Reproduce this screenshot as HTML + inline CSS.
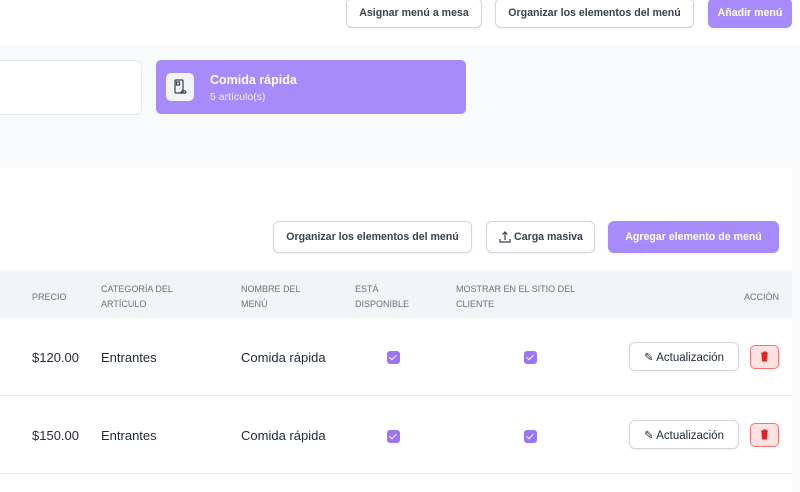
<!DOCTYPE html>
<html><head><meta charset="utf-8"><style>
*{box-sizing:border-box;margin:0;padding:0}
body{width:800px;height:492px;overflow:hidden;background:#fff;font-family:"Liberation Sans",sans-serif;color:#1f2937;position:relative}
.a{position:absolute}
.btn{position:absolute;border:1px solid #d1d5db;border-radius:6px;background:#fff;font-size:10.6px;font-weight:bold;color:#374151;display:flex;align-items:center;justify-content:center;box-shadow:0 1px 2px rgba(0,0,0,.06)}
.pb{background:#a78bfa;border-color:#a78bfa;color:#fff}
.th{position:absolute;font-size:9px;color:#6b7280;line-height:15px;text-transform:uppercase}
.td{position:absolute;font-size:13px;color:#1f2937}
.cb{position:absolute;width:13px;height:13px;border-radius:3px;background:#8b5cf6;opacity:.85}
.cb:after{content:"";position:absolute;left:4px;top:2px;width:3px;height:6px;border:solid #fff;border-width:0 1.5px 1.5px 0;transform:rotate(45deg)}
.del{position:absolute;width:29px;height:24px;border:1px solid #f87171;background:#fee2e2;border-radius:5px}
.up{font-weight:normal;color:#1f2937;font-size:11.5px}
</style></head><body>
<div class="btn" style="left:346px;top:-2px;width:136px;height:30px">Asignar menú a mesa</div>
<div class="btn" style="left:495px;top:-2px;width:199px;height:30px">Organizar los elementos del menú</div>
<div class="btn pb" style="left:708px;top:-2px;width:84px;height:30px">Añadir menú</div>
<div class="a" style="left:0;top:45px;width:800px;height:123px;background:#f9fafb"></div>
<div class="a" style="left:-10px;top:60px;width:152px;height:55px;background:#fff;border:1px solid #e5e7eb;border-radius:6px"></div>
<div class="a" style="left:156px;top:60px;width:310px;height:54px;background:#a78bfa;border-radius:5px"></div>
<div class="a" style="left:166px;top:73px;width:28px;height:28px;background:#f3f4f6;border-radius:5px">
<svg width="28" height="28" viewBox="0 0 28 28" fill="none" stroke="#374151" stroke-width="1.2"><rect x="9" y="7" width="8" height="13" rx="1"/><rect x="10.5" y="9" width="3" height="3"/><path d="M14 20h6M15 20a2.5 2.5 0 0 1 5 0M17.5 17v.5"/></svg></div>
<div class="a" style="left:210px;top:73px;font-size:12.5px;font-weight:bold;color:#fff">Comida rápida</div>
<div class="a" style="left:210px;top:91px;font-size:10.5px;color:#f3f0ff">5 artículo(s)</div>
<div class="a" style="left:792px;top:168px;width:8px;height:324px;background:#f9fafb"></div>
<div class="btn" style="left:273px;top:221px;width:199px;height:32px">Organizar los elementos del menú</div>
<div class="btn" style="left:486px;top:221px;width:109px;height:32px"><svg width="14" height="14" viewBox="0 0 14 14" fill="none" stroke="#374151" stroke-width="1.2" style="margin-right:2px"><path d="M2 9v3h10V9M7 10V2M4.5 4.5L7 2l2.5 2.5"/></svg>Carga masiva</div>
<div class="btn pb" style="left:608px;top:221px;width:171px;height:32px">Agregar elemento de menú</div>
<div class="a" style="left:0;top:271px;width:792px;height:47px;background:#f3f4f6"></div>
<div class="th" style="left:32px;top:290px">Precio</div>
<div class="th" style="left:101px;top:282px">Categoría del<br>artículo</div>
<div class="th" style="left:241px;top:282px">Nombre del<br>menú</div>
<div class="th" style="left:355px;top:282px">Está<br>disponible</div>
<div class="th" style="left:456px;top:282px">Mostrar en el sitio del<br>cliente</div>
<div class="th" style="right:21px;top:290px">Acción</div>
<div class="a" style="left:0;top:395px;width:792px;height:1px;background:#e5e7eb"></div>
<div class="a" style="left:0;top:473px;width:792px;height:1px;background:#e5e7eb"></div>
<div class="td" style="left:32px;top:350px">$120.00</div>
<div class="td" style="left:101px;top:350px">Entrantes</div>
<div class="td" style="left:241px;top:350px">Comida rápida</div>
<div class="cb" style="left:387px;top:351px"></div>
<div class="cb" style="left:524px;top:351px"></div>
<div class="btn up" style="left:629px;top:342px;width:110px;height:29px">✎ Actualización</div>
<div class="del" style="left:750px;top:345px"><svg width="27" height="22" viewBox="0 0 27 22"><path d="M10 7h7M12 6h3v1M11 8h5l-.5 7h-4z" fill="#dc2626" stroke="#dc2626" stroke-width="1"/></svg></div>
<div class="td" style="left:32px;top:428px">$150.00</div>
<div class="td" style="left:101px;top:428px">Entrantes</div>
<div class="td" style="left:241px;top:428px">Comida rápida</div>
<div class="cb" style="left:387px;top:430px"></div>
<div class="cb" style="left:524px;top:430px"></div>
<div class="btn up" style="left:629px;top:420px;width:110px;height:29px">✎ Actualización</div>
<div class="del" style="left:750px;top:423px"><svg width="27" height="22" viewBox="0 0 27 22"><path d="M10 7h7M12 6h3v1M11 8h5l-.5 7h-4z" fill="#dc2626" stroke="#dc2626" stroke-width="1"/></svg></div>
</body></html>
